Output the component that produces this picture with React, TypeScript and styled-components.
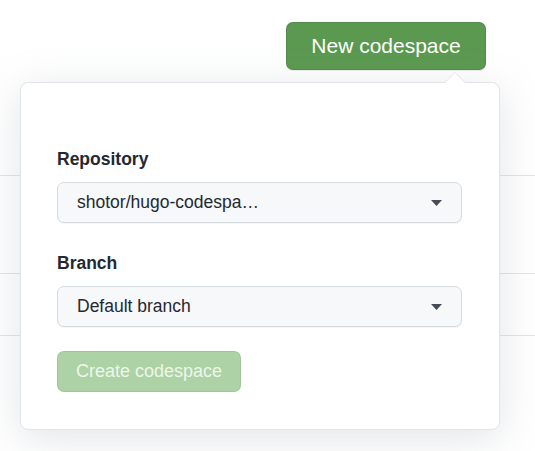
import React from 'react';
import styled, {createGlobalStyle} from "styled-components";

const GlobalStyle = createGlobalStyle`
  html, body {
    margin: 0;
    padding: 0;
    background: #ffffff;
    font-family: "Liberation Sans", Arial, sans-serif;
    color: #24292f;
  }
`;

const Caret = () => (
  <svg width="11" height="6" viewBox="0 0 11 6">
    <path d="M0 0h11L5.5 6z" fill="#444d56"/>
  </svg>
);

const selects = [
  {label: "Repository", value: "shotor/hugo-codespa…"},
  {label: "Branch", value: "Default branch"},
];

const App = () => {
  return (
    <StyledPage>
      <GlobalStyle/>
      <Header>
        <Anchor>
          <PrimaryButton>New codespace</PrimaryButton>
          <Popover>
            {selects.map((item) => (
              <Field key={item.label}>
                <Label>{item.label}</Label>
                <Select>
                  <span>{item.value}</span>
                  <Caret/>
                </Select>
              </Field>
            ))}
            <CreateButton disabled>Create codespace</CreateButton>
          </Popover>
        </Anchor>
      </Header>
      <List>
        <Row $height={105}/>
        <Row $height={97}/>
        <Row $height={61}/>
      </List>
    </StyledPage>
  );
};

export default App;

const StyledPage = styled.div`
  width: 535px;
  height: 451px;
  overflow: hidden;
`;

const Header = styled.div`
  display: flex;
  justify-content: flex-end;
  padding: 22px 49px 0 0;
`;

const Anchor = styled.div`
  position: relative;
  z-index: 1;
`;

const PrimaryButton = styled.button`
  box-sizing: border-box;
  width: 200px;
  height: 48px;
  border: 1px solid rgba(27, 31, 36, 0.12);
  border-radius: 7px;
  background: #5b9950;
  color: #ffffff;
  font-family: inherit;
  font-size: 21px;
  padding: 0;
  box-shadow: 0 1px 0 rgba(27, 31, 36, 0.08);
`;

const Popover = styled.div`
  position: absolute;
  top: calc(100% + 12px);
  right: -14px;
  box-sizing: border-box;
  width: 480px;
  padding: 64px 37px 37px 36px;
  background: #ffffff;
  border: 1px solid #e1e4e8;
  border-radius: 8px;
  box-shadow: 0 8px 40px rgba(140, 149, 159, 0.25);
  display: flex;
  flex-direction: column;
  align-items: flex-start;

  &::before, &::after {
    content: "";
    position: absolute;
    right: 33px;
    border: 11px solid transparent;
    border-top: 0;
  }

  &::before {
    top: -11px;
    border-bottom: 11px solid #e1e4e8;
  }

  &::after {
    top: -10px;
    border-bottom: 11px solid #ffffff;
  }
`;

const Field = styled.div`
  width: 100%;
  display: flex;
  flex-direction: column;
  margin-bottom: 28px;

  & + button {
    margin-top: -4px;
  }
`;

const Label = styled.label`
  font-size: 17.5px;
  font-weight: 700;
  line-height: 24px;
  margin-bottom: 11px;
  color: #24292f;
`;

const Select = styled.div`
  box-sizing: border-box;
  height: 41px;
  display: flex;
  align-items: center;
  justify-content: space-between;
  padding: 0 19px 0 19px;
  background: #f6f8fa;
  border: 1px solid #d5dadf;
  border-radius: 7px;
  font-size: 17.5px;
  color: #24292f;
  box-shadow: 0 1px 0 rgba(27, 31, 36, 0.04);
`;

const CreateButton = styled.button`
  box-sizing: border-box;
  height: 41px;
  padding: 0 18px;
  border: 1px solid rgba(27, 31, 36, 0.08);
  border-radius: 7px;
  background: #acd2a5;
  color: #eef6ea;
  font-family: inherit;
  font-size: 18px;
`;

const List = styled.div`
  display: flex;
  flex-direction: column;
`;

const Row = styled.div<{ $height: number }>`
  height: ${(p) => p.$height}px;
  border-bottom: 1px solid #e1e4e8;
`;
